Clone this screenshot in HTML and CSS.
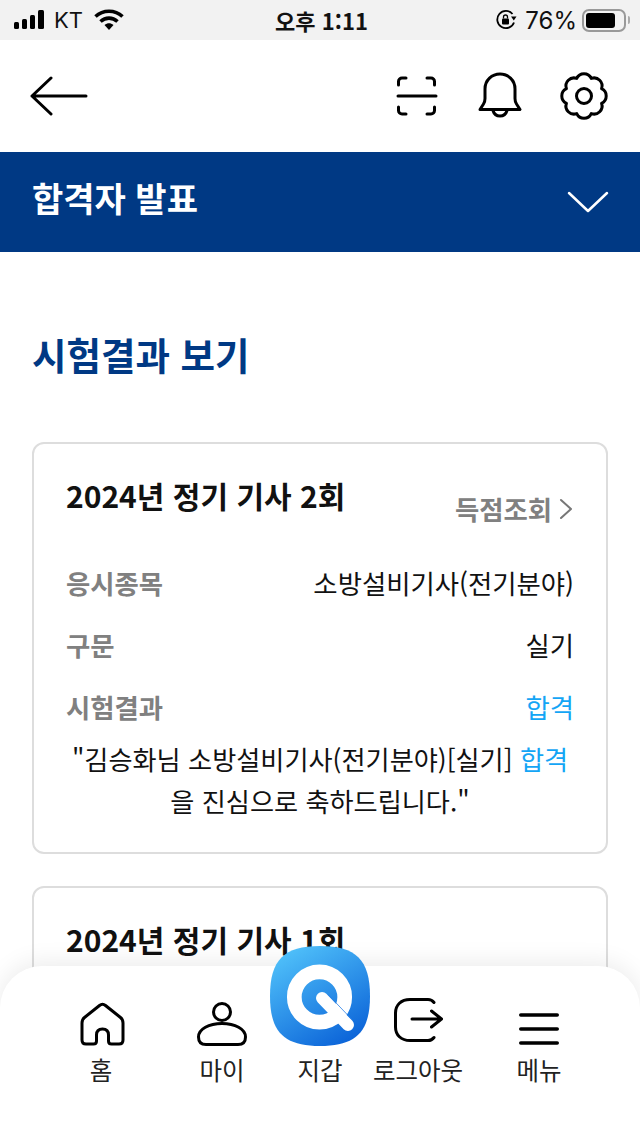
FILE: index.html
```html
<!DOCTYPE html>
<html lang="ko">
<head>
<meta charset="utf-8">
<title>합격자 발표</title>
<link rel="stylesheet" href="styles.css">
</head>
<body>
<div class="page">
  <div class="status">
    <div class="status-side">
      <svg class="signal" width="34" height="20" viewBox="0 0 34 20"><rect x="1" y="12" width="5" height="7" rx="1.5"/><rect x="9" y="9" width="5" height="10" rx="1.5"/><rect x="17" y="5" width="5" height="14" rx="1.5"/><rect x="25" y="0" width="6" height="19" rx="1.5"/></svg>
      <span class="carrier">KT</span>
      <svg class="wifi" width="30" height="22" viewBox="0 0 30 22"><path d="M1.500 7.500C9 .5 21 .5 28.500 7.500" fill="none" stroke="#000" stroke-width="3.600"/><path d="M6.500 12.500C11.500 8 18.500 8 23.500 12.500" fill="none" stroke="#000" stroke-width="3.600"/><path d="M10.500 16C13.500 13.500 16.500 13.500 19.500 16L15 21Z"/></svg>
    </div>
    <div class="clock">오후 1:11</div>
    <div class="status-side status-right">
      <svg class="lock" width="22" height="22" viewBox="0 0 22 22"><path d="M19 13.500A8.600 8.600 0 1 1 17.500 5" fill="none" stroke="#000" stroke-width="1.800"/><path d="M16 7.500h5.500l-2.700 4z"/><rect x="7" y="9.500" width="7" height="6" rx="1"/><path d="M8.500 9.500V8a2 2 0 0 1 4 0v1.500" fill="none" stroke="#000" stroke-width="1.300"/></svg>
      <span class="battery-text">76%</span>
      <span class="battery"><span class="battery-fill"></span></span>
      <span class="battery-cap"></span>
    </div>
  </div>

  <header class="topbar">
    <svg width="58" height="44" viewBox="0 0 58 44"><path d="M56 22H2M21 4 2 22l19 18" fill="none" stroke="#000" stroke-width="3" stroke-linecap="round" stroke-linejoin="round"/></svg>
    <div class="top-icons">
      <svg class="scan" width="42" height="42" viewBox="0 0 42 42"><path d="M2.500 10V6.500a3.500 3.500 0 0 1 3.500-3.500h4M31 3h4a3.500 3.500 0 0 1 3.500 3.500V10M2.500 32v3.500a3.500 3.500 0 0 0 3.500 3.500h4M31 39h4a3.500 3.500 0 0 0 3.500-3.500V32" fill="none" stroke="#000" stroke-width="3" stroke-linecap="round"/><path d="M2 21h38" stroke="#000" stroke-width="3" stroke-linecap="round"/></svg>
      <svg width="44" height="48" viewBox="0 0 44 48"><path d="M2 37.500 5.500 32c1-1.500 1.500-3 1.500-5.500V17C7 8 14 2 22 2s15 6 15 15v9.500c0 2.500.5 4 1.500 5.500l3.500 5.500z" fill="none" stroke="#000" stroke-width="3" stroke-linejoin="round"/><path d="M15 38.500c1 3.500 3.500 5.500 7 5.500s6-2 7-5.500" fill="none" stroke="#000" stroke-width="3"/></svg>
      <svg width="48" height="48" viewBox="0 0 48 48"><path d="M41.550 31.270A8 8 0 0 1 31.270 41.550 8 8 0 0 1 16.730 41.550 8 8 0 0 1 6.450 31.270 8 8 0 0 1 6.450 16.730 8 8 0 0 1 16.730 6.450 8 8 0 0 1 31.270 6.450 8 8 0 0 1 41.550 16.730 8 8 0 0 1 41.550 31.270Z" fill="none" stroke="#000" stroke-width="3" stroke-linejoin="round"/><circle cx="24" cy="24" r="7.500" fill="none" stroke="#000" stroke-width="3"/></svg>
    </div>
  </header>

  <div class="banner">
    <span class="banner-title">합격자 발표</span>
    <svg width="42" height="22" viewBox="0 0 42 22"><path d="M2 2l19 18L40 2" fill="none" stroke="#fff" stroke-width="2.500" stroke-linecap="round" stroke-linejoin="round"/></svg>
  </div>

  <main class="content">
    <h1 class="heading">시험결과 보기</h1>
    <section class="card">
      <div class="card-head">
        <h2 class="card-title">2024년 정기 기사 2회</h2>
        <span class="score-link">득점조회
          <svg width="14" height="22" viewBox="0 0 14 22"><path d="M2 2l10 9-10 9" fill="none" stroke="#777" stroke-width="2" stroke-linecap="round" stroke-linejoin="round"/></svg>
        </span>
      </div>
      <div class="row"><span class="label">응시종목</span><span class="value">소방설비기사(전기분야)</span></div>
      <div class="row"><span class="label">구문</span><span class="value">실기</span></div>
      <div class="row"><span class="label">시험결과</span><span class="value pass">합격</span></div>
      <p class="message">"김승화님 소방설비기사(전기분야)[실기] <span class="pass">합격</span><br>을 진심으로 축하드립니다."</p>
    </section>
    <section class="card">
      <div class="card-head">
        <h2 class="card-title">2024년 정기 기사 1회</h2>
      </div>
    </section>
  </main>

  <nav class="tabbar">
    <div class="tab tab-wide">
      <svg width="48" height="48" viewBox="-1.500 0 48 48"><path d="M21 5.500Q24 3 27 5.500L42 17.500Q44.500 19.500 44.500 23V40Q44.500 44 40.500 44H33Q30 44 30 41V35Q30 29 24 29 18 29 18 35V41Q18 44 15 44H7.500Q3.500 44 3.500 40V23Q3.500 19.500 6 17.500Z" fill="none" stroke="#000" stroke-width="3" stroke-linejoin="round"/></svg>
      <span class="tab-label">홈</span>
    </div>
    <div class="tab">
      <svg width="52" height="48" viewBox="0 0 52 48"><circle cx="26" cy="12" r="8.500" fill="none" stroke="#000" stroke-width="3"/><path d="M26 23.500C13 23.500 2.500 29 2.500 37 2.500 41.500 5 44.500 10 44.500H42C47 44.500 49.500 41.500 49.500 37 49.500 29 39 23.500 26 23.500Z" fill="none" stroke="#000" stroke-width="3"/></svg>
      <span class="tab-label">마이</span>
    </div>
    <div class="tab">
      <span class="tab-gap"></span>
      <span class="tab-label">지갑</span>
    </div>
    <div class="tab">
      <svg class="icon-tall" width="50" height="52" viewBox="0 0 50 52"><path d="M41 6.500C39.500 4.500 37.500 3.500 35 3.500H17C8 3.500 2.500 9 2.500 17V31C2.500 39 8 44.500 17 44.500H35C37.500 44.500 39.500 43.500 41 41.500" fill="none" stroke="#000" stroke-width="3" stroke-linecap="round"/><path d="M19 23H48.500M38.500 15 48.500 23 38.500 31" fill="none" stroke="#000" stroke-width="3" stroke-linecap="round" stroke-linejoin="round"/></svg>
      <span class="tab-label">로그아웃</span>
    </div>
    <div class="tab tab-wide">
      <svg width="44" height="48" viewBox="0 0 44 48"><path d="M3.750 15H40.250M3.750 29H40.250M3.750 43H40.250" stroke="#000" stroke-width="3.500" stroke-linecap="round"/></svg>
      <span class="tab-label">메뉴</span>
    </div>
    <svg class="qlogo" width="100" height="100" viewBox="0 0 100 100">
      <defs><linearGradient id="qg" x1="0.150" y1="0" x2="0.750" y2="1"><stop offset="0" stop-color="#52c4fb"/><stop offset="1" stop-color="#0b63d8"/></linearGradient></defs>
      <path d="M50 0C86 0 100 14 100 50S86 100 50 100 0 86 0 50 14 0 50 0z" fill="url(#qg)"/>
      <circle cx="49.500" cy="51" r="25.200" fill="none" stroke="#fff" stroke-width="14.700"/>
      <path d="M52 52 78 79" stroke="#fff" stroke-width="12" stroke-linecap="round"/>
      <path d="M58 48.500 81.500 73" stroke="#2a7fe6" stroke-width="0.800"/>
    </svg>
  </nav>
</div>
</body>
</html>
```

FILE: styles.css
```css
* { box-sizing: border-box; }
html, body { margin: 0; padding: 0; }
body { font-family: "Noto Sans CJK KR", "Noto Sans", sans-serif; color: #111; background: #fff; }
.page { position: relative; width: 640px; height: 1136px; overflow: hidden; background: #fff; }

.status { height: 40px; background: #f2f2f2; display: flex; align-items: center; justify-content: space-between; padding: 0 10px 0 13px; }
.status-side { width: 200px; display: flex; align-items: center; gap: 7px; }
.status-right { justify-content: flex-end; gap: 6px; }
.signal { fill: #000; }
.wifi { margin-left: 4px; }
.lock { margin-right: 2px; }
.carrier { font-family: "Inter", sans-serif; font-size: 22px; color: #111; }
.clock { font-size: 22px; font-weight: 700; line-height: 1; color: #111; }
.battery-text { font-family: "Inter", sans-serif; font-size: 24px; color: #111; }
.battery { width: 44px; height: 23px; margin-left: -1px; border: 2px solid #999; border-radius: 7px; padding: 2px; display: flex; }
.battery-fill { width: 29px; background: #000; border-radius: 3px; }
.battery-cap { width: 2px; height: 8px; margin-left: -4px; background: #aaa; border-radius: 0 2px 2px 0; }

.topbar { height: 112px; display: flex; align-items: center; justify-content: space-between; padding: 0 32px 0 30px; }
.top-icons { display: flex; align-items: center; gap: 38px; }
.scan { margin-right: 2px; }

.banner { height: 100px; background: #003984; display: flex; align-items: center; justify-content: space-between; padding: 0 31px 0 32px; }
.banner-title { margin-top: -9px; color: #fff; font-size: 34px; font-weight: 700; }

.content { padding: 0 32px; }
.heading { margin: 72px 0 58px; font-size: 37.500px; line-height: 60px; font-weight: 700; color: #003984; }
.card { border: 2px solid #ddd; border-radius: 12px; padding: 25px 32px 24px; margin-bottom: 32px; height: 412px; }
.card-head { display: flex; justify-content: space-between; align-items: flex-start; height: 90px; }
.card-title { margin: -1px 0 0; font-size: 30px; font-weight: 700; line-height: 54px; color: #111; }
.score-link { display: flex; align-items: center; gap: 7px; margin: 16px 1px 0 0; font-size: 26.400px; font-weight: 700; line-height: 48px; color: #808080; }
.row { display: flex; justify-content: space-between; height: 62px; font-size: 26.400px; line-height: 48px; }
.label { color: #808080; font-weight: 700; }
.value { color: #111; }
.pass { color: #14a5f5; }
.message { margin: -7px -10px 0; text-align: center; font-size: 26.200px; line-height: 42px; color: #111; }

.tabbar { position: absolute; left: 0; right: 0; bottom: 0; height: 170px; background: #fff; border-radius: 42px 42px 0 0; box-shadow: 0 -4px 24px rgba(0,0,0,.08); display: flex; padding: 34px 0 0 29px; }
.tab { flex: none; width: 98px; display: flex; flex-direction: column; align-items: center; height: 90px; }
.tab-wide { width: 144px; }
.tab svg { flex: none; }
.tab .icon-tall { margin: -4px 0 0; }
.tab-gap { height: 48px; }
.tab-label { margin-top: 4px; font-size: 24.500px; line-height: 36px; color: #222; white-space: nowrap; }
.tabbar .qlogo { position: absolute; left: 270px; top: -20px; }
```
